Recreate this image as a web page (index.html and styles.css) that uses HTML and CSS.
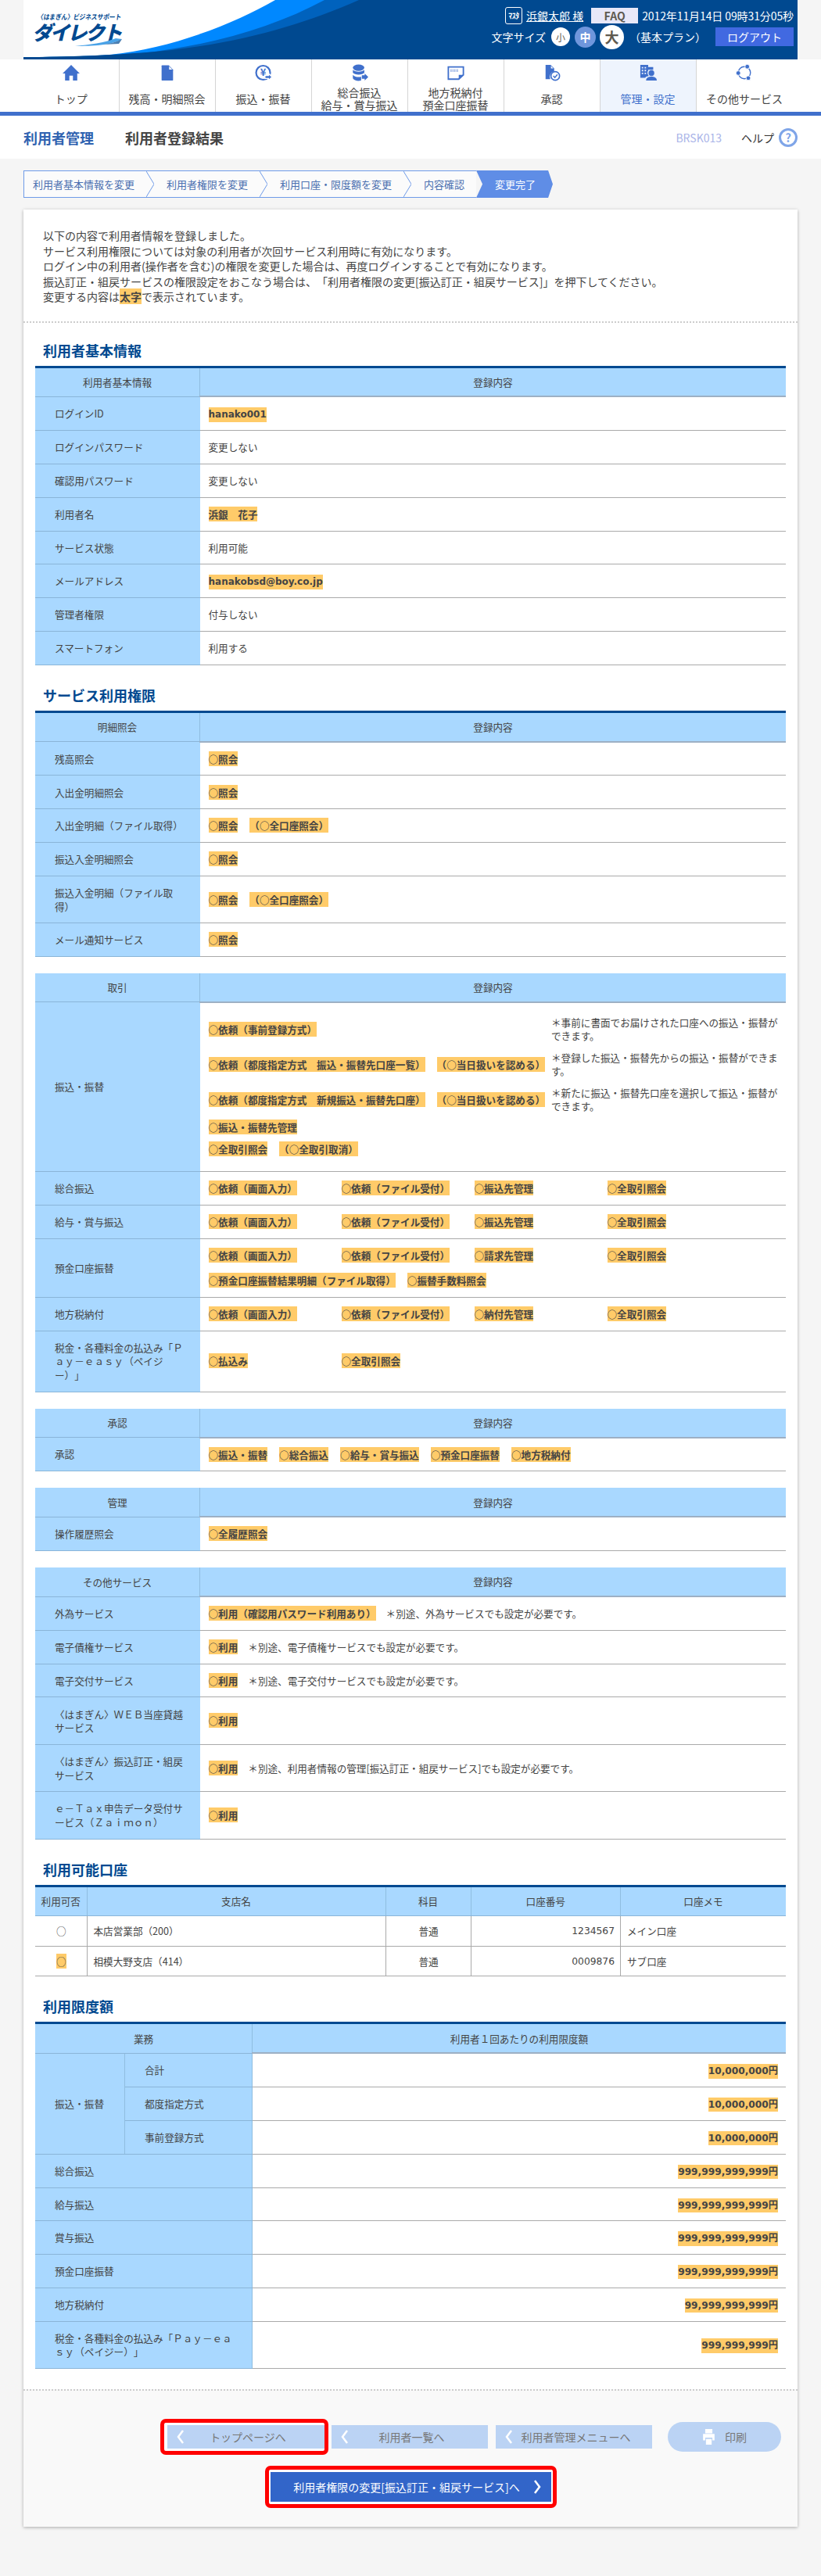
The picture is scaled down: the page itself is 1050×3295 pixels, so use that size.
FILE: index.html
```html
<!DOCTYPE html>
<html lang="ja">
<head>
    <meta charset="utf-8">
    <title>利用者登録結果</title>
    <link rel="stylesheet" href="styles.css">
</head>
<body>
    <header class="site-header">
        <svg class="swoosh" viewBox="0 0 990 76" preserveAspectRatio="none">
            <path fill="#0088ff" d="M322 0 C270 30 190 62 110 70 C70 73 30 73 0 73 L0 76 L990 76 L990 0 Z"/>
            <path fill="#0062bd" d="M385 0 C320 35 240 58 150 68 C100 72 40 73 0 73 L0 76 L990 76 L990 0 Z"/>
            <path fill="#004990" d="M429 0 C360 30 290 52 190 64 C120 71 50 73 0 73 L0 76 L990 76 L990 0 Z"/>
        </svg>
        <div class="logo">
            <div class="logo-sub">〈はまぎん〉ビジネスサポート</div>
            <div class="logo-main">ダイレクト</div>
            <svg class="logo-wave" viewBox="0 0 60 12"><path fill="#4aa3e8" d="M0 11 C18 9 38 7 52 1 L60 2 C46 10 22 11 0 11 Z"/><path fill="#004990" d="M36 9 C44 8 52 6 60 2 L56 8 Z" opacity="0.7"/></svg>
        </div>
        <div class="user-box">
            <div class="user-row">
                <span class="master-mark">ﾏｽﾀ</span>
                <a class="user-name">浜銀太郎 様</a>
                <span class="faq">FAQ</span>
                <span class="clock">2012年11月14日 09時31分05秒</span>
            </div>
            <div class="user-row user-row-size">
                <span class="size-label">文字サイズ</span>
                <span class="size-btn size-s">小</span>
                <span class="size-btn size-m">中</span>
                <span class="size-btn size-l">大</span>
                <span class="plan">（基本プラン）</span>
                <span class="logout">ログアウト</span>
            </div>
        </div>
    </header>

    <nav class="main-nav">
        <ul class="nav-list">
            <li class="nav-item">
                <svg class="nav-icon" viewBox="0 0 24 24"><path d="M12 1 L24 13 H20.500 V23 H14.500 V16 H9.500 V23 H3.500 V13 H0 Z"/></svg>
                <span class="nav-label">トップ</span>
            </li>
            <li class="nav-item">
                <svg class="nav-icon" viewBox="0 0 24 24"><path d="M5 1.500 H14 L20 8 V22 Q20 23 19 23 H5 Q4 23 4 22 V2.500 Q4 1.500 5 1.500 Z"/><path fill="#fff" d="M14.500 3 L18.800 7.600 H14.500 Z"/></svg>
                <span class="nav-label">残高・明細照会</span>
            </li>
            <li class="nav-item">
                <svg class="nav-icon" viewBox="0 0 24 24"><circle cx="11.500" cy="12" r="9.800" fill="none" stroke="#4070cc" stroke-width="2.400"/><text x="11.500" y="16.500" text-anchor="middle" class="yen">¥</text><path stroke="#fff" stroke-width="1.500" d="M14 16 H19 V13 L24 18 L19 23 V20 H14 Z"/></svg>
                <span class="nav-label">振込・振替</span>
            </li>
            <li class="nav-item">
                <svg class="nav-icon" viewBox="0 0 24 24"><ellipse cx="10.500" cy="5" rx="8" ry="4.500"/><path d="M2.500 8 C5 11.500 16 11.500 18.500 8 V12 C16 15.500 5 15.500 2.500 12 Z"/><path d="M2.500 15 C5 18.500 12 18.500 14 17.500 V23 C9 24 4 23 2.500 20 Z"/><path d="M15 15.500 H19 V13 L24 18 L19 23 V20.500 H15 Z"/></svg>
                <span class="nav-label">総合振込<br>給与・賞与振込</span>
            </li>
            <li class="nav-item">
                <svg class="nav-icon" viewBox="0 0 24 24"><path fill="none" stroke="#4070cc" stroke-width="2" d="M1.500 4 H22.500 V15 L16 21 H1.500 Z"/><path d="M22 15 H16 V21 Z"/><path d="M4.500 7 h1.500 v4 h-1.500 z M7 7 h1 v4 h-1 z M9 7 h1.500 v4 h-1.500 z M11.500 7 h1 v4 h-1 z M13.500 7 h1.500 v4 h-1.500 z" opacity="0.55"/></svg>
                <span class="nav-label">地方税納付<br>預金口座振替</span>
            </li>
            <li class="nav-item">
                <svg class="nav-icon" viewBox="0 0 24 24"><path d="M3 1 H10 L15 6 V10 A8 8 0 0 0 9.500 21 H3 Z"/><path fill="#fff" d="M10.500 2.500 L13.800 6 H10.500 Z"/><circle cx="16.500" cy="16.500" r="6" fill="none" stroke="#4070cc" stroke-width="1.800"/><path fill="none" stroke="#4070cc" stroke-width="1.600" d="M13.800 16.500 L16 18.800 L19.500 14.500"/></svg>
                <span class="nav-label">承認</span>
            </li>
            <li class="nav-item nav-item-active">
                <svg class="nav-icon" viewBox="0 0 24 24"><path d="M1 1 H12 V4 H19 V8 H12 V9 A5 5 0 0 0 13 16 H12 V17 C9 17.500 8.500 18 8 19 H1 Z"/><path fill="#eef4fd" d="M3 4 h2 v2 h-2 z M7 4 h2 v2 h-2 z M3 8 h2 v2 h-2 z M7 8 h2 v2 h-2 z M3 12 h2 v2 h-2 z M7 12 h2 v2 h-2 z"/><circle cx="16.500" cy="12.500" r="4"/><path d="M9 23 C9 18.500 13 17.500 16.500 17.500 C20 17.500 24 18.500 24 23 Z"/></svg>
                <span class="nav-label">管理・設定</span>
            </li>
            <li class="nav-item">
                <svg class="nav-icon" viewBox="0 0 24 24"><circle cx="12" cy="12" r="8.500" fill="none" stroke="#4070cc" stroke-width="1.500"/><circle cx="16" cy="3.500" r="3.200" stroke="#fff"/><circle cx="3.500" cy="12.500" r="3.200" stroke="#fff"/><circle cx="17.500" cy="19.500" r="3.200" stroke="#fff"/></svg>
                <span class="nav-label">その他サービス</span>
            </li>
        </ul>
    </nav>

    <div class="page-title">
        <span class="title-group">利用者管理</span>
        <h1 class="title-main">利用者登録結果</h1>
        <span class="screen-id">BRSK013</span>
        <span class="help">ヘルプ<span class="help-mark">?</span></span>
    </div>

    <ol class="steps">
        <li class="step">利用者基本情報を変更</li>
        <li class="step-sep"><svg viewBox="0 0 10 33" preserveAspectRatio="none"><path d="M0 0 L10 16.500 L0 33"/></svg></li>
        <li class="step">利用者権限を変更</li>
        <li class="step-sep"><svg viewBox="0 0 10 33" preserveAspectRatio="none"><path d="M0 0 L10 16.500 L0 33"/></svg></li>
        <li class="step">利用口座・限度額を変更</li>
        <li class="step-sep"><svg viewBox="0 0 10 33" preserveAspectRatio="none"><path d="M0 0 L10 16.500 L0 33"/></svg></li>
        <li class="step">内容確認</li>
        <li class="step step-now">変更完了</li>
    </ol>

    <main class="card">
        <div class="intro">
            <p>以下の内容で利用者情報を登録しました。</p>
            <p>サービス利用権限については対象の利用者が次回サービス利用時に有効になります。</p>
            <p>ログイン中の利用者(操作者を含む)の権限を変更した場合は、再度ログインすることで有効になります。</p>
            <p>振込訂正・組戻サービスの権限設定をおこなう場合は、「利用者権限の変更[振込訂正・組戻サービス]」を押下してください。</p>
            <p>変更する内容は<span class="mark-bold">太字</span>で表示されています。</p>
        </div>

        <div class="content">
            <h2 class="sec-head">利用者基本情報</h2>
            <table class="tbl tbl-top">
                <colgroup><col class="col-name"><col></colgroup>
                <tr><th>利用者基本情報</th><th class="th-main">登録内容</th></tr>
                <tr><th class="row-name">ログインID</th><td><span class="hl latin">hanako001</span></td></tr>
                <tr><th class="row-name">ログインパスワード</th><td>変更しない</td></tr>
                <tr><th class="row-name">確認用パスワード</th><td>変更しない</td></tr>
                <tr><th class="row-name">利用者名</th><td><span class="hl">浜銀　花子</span></td></tr>
                <tr><th class="row-name">サービス状態</th><td>利用可能</td></tr>
                <tr><th class="row-name">メールアドレス</th><td><span class="hl latin">hanakobsd@boy.co.jp</span></td></tr>
                <tr><th class="row-name">管理者権限</th><td>付与しない</td></tr>
                <tr><th class="row-name">スマートフォン</th><td>利用する</td></tr>
            </table>

            <h2 class="sec-head">サービス利用権限</h2>
            <table class="tbl tbl-top">
                <colgroup><col class="col-name"><col></colgroup>
                <tr><th>明細照会</th><th class="th-main">登録内容</th></tr>
                <tr><th class="row-name">残高照会</th><td><span class="hl">○照会</span></td></tr>
                <tr><th class="row-name">入出金明細照会</th><td><span class="hl">○照会</span></td></tr>
                <tr><th class="row-name">入出金明細（ファイル取得）</th><td><span class="hl">○照会</span><span class="hl">（○全口座照会）</span></td></tr>
                <tr><th class="row-name">振込入金明細照会</th><td><span class="hl">○照会</span></td></tr>
                <tr><th class="row-name">振込入金明細（ファイル取得）</th><td><span class="hl">○照会</span><span class="hl">（○全口座照会）</span></td></tr>
                <tr><th class="row-name">メール通知サービス</th><td><span class="hl">○照会</span></td></tr>
            </table>

            <table class="tbl tbl-next">
                <colgroup><col class="col-name"><col></colgroup>
                <tr><th>取引</th><th class="th-main">登録内容</th></tr>
                <tr>
                    <th class="row-name">振込・振替</th>
                    <td class="td-transfer">
                        <div class="note-row"><div><span class="hl">○依頼（事前登録方式）</span></div><div class="note">＊事前に書面でお届けされた口座への振込・振替ができます。</div></div>
                        <div class="note-row"><div><span class="hl">○依頼（都度指定方式　振込・振替先口座一覧）</span><span class="hl">（○当日扱いを認める）</span></div><div class="note">＊登録した振込・振替先からの振込・振替ができます。</div></div>
                        <div class="note-row"><div><span class="hl">○依頼（都度指定方式　新規振込・振替先口座）</span><span class="hl">（○当日扱いを認める）</span></div><div class="note">＊新たに振込・振替先口座を選択して振込・振替ができます。</div></div>
                        <div class="opt-line"><span class="hl">○振込・振替先管理</span></div>
                        <div class="opt-line"><span class="hl">○全取引照会</span><span class="hl">（○全取引取消）</span></div>
                    </td>
                </tr>
                <tr>
                    <th class="row-name">総合振込</th>
                    <td><div class="cols"><div><span class="hl">○依頼（画面入力）</span></div><div><span class="hl">○依頼（ファイル受付）</span></div><div><span class="hl">○振込先管理</span></div><div><span class="hl">○全取引照会</span></div></div></td>
                </tr>
                <tr>
                    <th class="row-name">給与・賞与振込</th>
                    <td><div class="cols"><div><span class="hl">○依頼（画面入力）</span></div><div><span class="hl">○依頼（ファイル受付）</span></div><div><span class="hl">○振込先管理</span></div><div><span class="hl">○全取引照会</span></div></div></td>
                </tr>
                <tr>
                    <th class="row-name">預金口座振替</th>
                    <td>
                        <div class="cols"><div><span class="hl">○依頼（画面入力）</span></div><div><span class="hl">○依頼（ファイル受付）</span></div><div><span class="hl">○請求先管理</span></div><div><span class="hl">○全取引照会</span></div></div>
                        <div class="opt-gap"><span class="hl">○預金口座振替結果明細（ファイル取得）</span><span class="hl">○振替手数料照会</span></div>
                    </td>
                </tr>
                <tr>
                    <th class="row-name">地方税納付</th>
                    <td><div class="cols"><div><span class="hl">○依頼（画面入力）</span></div><div><span class="hl">○依頼（ファイル受付）</span></div><div><span class="hl">○納付先管理</span></div><div><span class="hl">○全取引照会</span></div></div></td>
                </tr>
                <tr>
                    <th class="row-name">税金・各種料金の払込み「Ｐａｙ－ｅａｓｙ（ペイジー）」</th>
                    <td><div class="cols"><div><span class="hl">○払込み</span></div><div><span class="hl">○全取引照会</span></div></div></td>
                </tr>
            </table>

            <table class="tbl tbl-next">
                <colgroup><col class="col-name"><col></colgroup>
                <tr><th>承認</th><th class="th-main">登録内容</th></tr>
                <tr><th class="row-name">承認</th><td><span class="hl">○振込・振替</span><span class="hl">○総合振込</span><span class="hl">○給与・賞与振込</span><span class="hl">○預金口座振替</span><span class="hl">○地方税納付</span></td></tr>
            </table>

            <table class="tbl tbl-next">
                <colgroup><col class="col-name"><col></colgroup>
                <tr><th>管理</th><th class="th-main">登録内容</th></tr>
                <tr><th class="row-name">操作履歴照会</th><td><span class="hl">○全履歴照会</span></td></tr>
            </table>

            <table class="tbl tbl-next">
                <colgroup><col class="col-name"><col></colgroup>
                <tr><th>その他サービス</th><th class="th-main">登録内容</th></tr>
                <tr><th class="row-name">外為サービス</th><td><span class="hl">○利用（確認用パスワード利用あり）</span><span class="after-hl">＊別途、外為サービスでも設定が必要です。</span></td></tr>
                <tr><th class="row-name">電子債権サービス</th><td><span class="hl">○利用</span><span class="after-hl">＊別途、電子債権サービスでも設定が必要です。</span></td></tr>
                <tr><th class="row-name">電子交付サービス</th><td><span class="hl">○利用</span><span class="after-hl">＊別途、電子交付サービスでも設定が必要です。</span></td></tr>
                <tr><th class="row-name">〈はまぎん〉ＷＥＢ当座貸越サービス</th><td><span class="hl">○利用</span></td></tr>
                <tr><th class="row-name">〈はまぎん〉振込訂正・組戻サービス</th><td><span class="hl">○利用</span><span class="after-hl">＊別途、利用者情報の管理[振込訂正・組戻サービス]でも設定が必要です。</span></td></tr>
                <tr><th class="row-name">ｅ－Ｔａｘ申告データ受付サービス（Ｚａｉｍｏｎ）</th><td><span class="hl">○利用</span></td></tr>
            </table>

            <h2 class="sec-head">利用可能口座</h2>
            <table class="tbl tbl-top tbl-acct">
                <colgroup><col class="col-a1"><col class="col-a2"><col class="col-a3"><col class="col-a4"><col></colgroup>
                <tr><th>利用可否</th><th>支店名</th><th>科目</th><th>口座番号</th><th>口座メモ</th></tr>
                <tr><td class="center">○</td><td>本店営業部（200）</td><td class="center">普通</td><td class="right acct-no">1234567</td><td>メイン口座</td></tr>
                <tr><td class="center"><span class="hl hl-tight">○</span></td><td>相模大野支店（414）</td><td class="center">普通</td><td class="right acct-no">0009876</td><td>サブ口座</td></tr>
            </table>

            <h2 class="sec-head">利用限度額</h2>
            <table class="tbl tbl-top tbl-limit">
                <colgroup><col class="col-l1"><col class="col-l2"><col></colgroup>
                <tr><th colspan="2">業務</th><th class="th-main">利用者１回あたりの利用限度額</th></tr>
                <tr><th class="row-name" rowspan="3">振込・振替</th><th class="row-name">合計</th><td class="right"><span class="hl amount">10,000,000円</span></td></tr>
                <tr><th class="row-name">都度指定方式</th><td class="right"><span class="hl amount">10,000,000円</span></td></tr>
                <tr><th class="row-name">事前登録方式</th><td class="right"><span class="hl amount">10,000,000円</span></td></tr>
                <tr><th class="row-name" colspan="2">総合振込</th><td class="right"><span class="hl amount">999,999,999,999円</span></td></tr>
                <tr><th class="row-name" colspan="2">給与振込</th><td class="right"><span class="hl amount">999,999,999,999円</span></td></tr>
                <tr><th class="row-name" colspan="2">賞与振込</th><td class="right"><span class="hl amount">999,999,999,999円</span></td></tr>
                <tr><th class="row-name" colspan="2">預金口座振替</th><td class="right"><span class="hl amount">999,999,999,999円</span></td></tr>
                <tr><th class="row-name" colspan="2">地方税納付</th><td class="right"><span class="hl amount">99,999,999,999円</span></td></tr>
                <tr><th class="row-name" colspan="2">税金・各種料金の払込み「Ｐａｙ－ｅａｓｙ（ペイジー）」</th><td class="right"><span class="hl amount">999,999,999円</span></td></tr>
            </table>
        </div>

        <div class="actions">
            <div class="action-row">
                <span class="red-frame red-frame-back">
                    <a class="btn btn-back">
                        <svg class="chev chev-left" viewBox="0 0 10 18"><path d="M8 1 L2 9 L8 17"/></svg>
                        トップページへ
                    </a>
                </span>
                <a class="btn btn-back btn-list">
                    <svg class="chev chev-left" viewBox="0 0 10 18"><path d="M8 1 L2 9 L8 17"/></svg>
                    利用者一覧へ
                </a>
                <a class="btn btn-back btn-menu">
                    <svg class="chev chev-left" viewBox="0 0 10 18"><path d="M8 1 L2 9 L8 17"/></svg>
                    利用者管理メニューへ
                </a>
                <a class="btn-print">
                    <svg class="print-icon" viewBox="0 0 18 24"><path fill="#fff" d="M4 1 H14 V7 H4 Z M1 8 H17 V17 H14 V13 H4 V17 H1 Z M5 15 H13 V23 H5 Z"/></svg>
                    印刷
                </a>
            </div>
            <div class="action-row action-row-main">
                <span class="red-frame">
                    <a class="btn btn-main">
                        利用者権限の変更[振込訂正・組戻サービス]へ
                        <svg class="chev chev-right" viewBox="0 0 10 18"><path d="M2 1 L8 9 L2 17"/></svg>
                    </a>
                </span>
            </div>
        </div>
    </main>
</body>
</html>
```
FILE: styles.css
```css
* {
    box-sizing: border-box;
}
body {
    margin: 0;
    height: 3295px;
    background-color: #f5f5f5;
    font-family: "Noto Sans CJK JP", "Noto Sans", sans-serif;
    font-size: 14px;
    color: #444;
    text-spacing-trim: space-all;
}
ul, ol {
    list-style: none;
    margin: 0;
    padding: 0;
}

/* header */
.site-header {
    position: relative;
    display: flex;
    justify-content: space-between;
    width: 990px;
    height: 76px;
    margin: 0 30px;
    background: #fff;
    overflow: hidden;
}
.swoosh {
    position: absolute;
    left: 0;
    top: 0;
    width: 990px;
    height: 76px;
}
.logo {
    position: relative;
    width: 120px;
    margin-left: 14px;
    padding-top: 15px;
    color: #004990;
}
.logo-sub {
    margin-left: 4px;
    font-size: 9px;
    line-height: 13px;
    font-weight: bold;
    white-space: nowrap;
    transform-origin: left center;
    transform: scaleX(0.85) skewX(-10deg);
}
.logo-main {
    font-size: 25px;
    line-height: 25px;
    font-weight: 900;
    white-space: nowrap;
    transform: skewX(-14deg);
    letter-spacing: -2.500px;
}
.logo-wave {
    position: absolute;
    left: 52px;
    top: 48px;
    width: 60px;
    height: 12px;
}
.user-box {
    position: relative;
    padding: 9px 5px 0 0;
    color: #fff;
}
.user-row {
    display: flex;
    align-items: center;
    justify-content: flex-end;
    height: 22px;
    white-space: nowrap;
}
.user-row-size {
    height: 32px;
}
.master-mark {
    width: 22px;
    height: 22px;
    margin-right: 5px;
    border: 1px solid #fff;
    border-radius: 3px;
    background: #004990;
    font-size: 10px;
    line-height: 20px;
    font-weight: bold;
    text-align: center;
    letter-spacing: -0.5px;
}
.user-name {
    text-decoration: underline;
    margin-right: 10px;
}
.faq {
    width: 60px;
    height: 20px;
    margin-right: 5px;
    background: #e8e8f8;
    color: #5f5a50;
    font-weight: bold;
    line-height: 20px;
    text-align: center;
}
.clock {
    letter-spacing: -0.1px;
}
.size-label {
    margin-right: 7px;
}
.size-btn {
    display: flex;
    justify-content: center;
    align-items: center;
    border-radius: 50%;
}
.size-s {
    width: 24px;
    height: 24px;
    background: #fff;
    color: #5f5a50;
    font-size: 12px;
    margin-right: 6px;
}
.size-m {
    width: 27px;
    height: 27px;
    background: #6f96dc;
    color: #fff;
    font-weight: bold;
    margin-right: 5px;
}
.size-l {
    width: 31px;
    height: 31px;
    background: #fff;
    color: #5f5a50;
    font-size: 18px;
    font-weight: bold;
    margin-right: 7px;
}
.plan {
    margin-right: 12px;
}
.logout {
    width: 100px;
    height: 24px;
    background: #4169e1;
    text-align: center;
    line-height: 24px;
}

/* global nav */
.main-nav {
    height: 72px;
    background: #fff;
    border-bottom: 5px solid #4070cc;
}
.nav-list {
    display: flex;
    width: 990px;
    height: 67px;
    margin-left: 30px;
}
.nav-item {
    width: 123px;
    height: 67px;
    padding-top: 6px;
    border-right: 1px solid #d5d5d5;
    text-align: center;
}
.nav-item:first-child {
    width: 122.500px;
}
.nav-item:last-child {
    border-right: none;
}
.nav-item-active {
    background: #eef4fd;
}
.nav-item-active .nav-label {
    color: #4070cc;
}
.nav-icon {
    display: block;
    width: 22px;
    height: 22px;
    margin: 0 auto;
    fill: #4070cc;
}
.yen {
    font-size: 14px;
    font-weight: bold;
    fill: #4070cc;
}
.nav-label {
    display: flex;
    align-items: center;
    justify-content: center;
    height: 33px;
    margin-top: 5px;
    line-height: 16px;
}

/* title band */
.page-title {
    display: flex;
    align-items: center;
    height: 55px;
    padding: 0 30px;
    background: #fff;
}
.title-group {
    width: 130px;
    font-size: 18px;
    font-weight: bold;
    color: #2f62b0;
}
.title-main {
    margin: 0;
    font-size: 18px;
    font-weight: bold;
    color: #444;
}
.screen-id {
    margin-left: auto;
    margin-right: 25px;
    color: #aab4e8;
}
.help {
    display: flex;
    align-items: center;
    color: #333;
}
.help-mark {
    width: 24px;
    height: 24px;
    margin-left: 6px;
    border: 3px solid #7fa5e8;
    border-radius: 50%;
    color: #7fa5e8;
    font-size: 15px;
    font-weight: bold;
    line-height: 18px;
    text-align: center;
}

/* steps */
.steps {
    display: flex;
    width: 677px;
    height: 35px;
    margin: 15px 0 0 30px;
    font-size: 13px;
    color: #4a6fb0;
}
.step {
    height: 35px;
    padding: 0 15px 0 16px;
    line-height: 33px;
    white-space: nowrap;
    background: #fbfbfb;
    border-top: 1px solid #6f9be8;
    border-bottom: 1px solid #6f9be8;
}
.step:first-child {
    padding-left: 11px;
    border-left: 1px solid #6f9be8;
}
.step-sep {
    width: 10px;
    height: 35px;
    background: #fbfbfb;
    border-top: 1px solid #6f9be8;
    border-bottom: 1px solid #6f9be8;
}
.step-sep svg {
    display: block;
    width: 10px;
    height: 33px;
}
.step-sep path {
    fill: none;
    stroke: #6f9be8;
    stroke-width: 1;
}
.step-now {
    width: 102px;
    padding: 0 0 0 24px;
    line-height: 35px;
    border: none;
    background: #5f8de6;
    color: #fff;
    clip-path: polygon(0 0, 92px 0, 100% 50%, 92px 100%, 0 100%, 8px 50%);
}

/* card */
.card {
    width: 990px;
    margin: 15px 0 0 30px;
    background: #fff;
    box-shadow: 0 1px 4px rgba(0, 0, 0, 0.3);
}
.intro {
    padding: 24px 25px 21px;
    border-bottom: 2px dotted #ccc;
    line-height: 19.500px;
}
.intro p {
    margin: 0;
}
.mark-bold {
    font-weight: bold;
    background: #ffcb69;
}
.content {
    padding: 1px 15px 26px;
}
.sec-head {
    margin: 25px 0 7px 10px;
    font-size: 18px;
    line-height: 26px;
    font-weight: bold;
    color: #004990;
}
.sec-head:first-child {
    margin-top: 21px;
}

/* tables */
.tbl {
    width: 960px;
    table-layout: fixed;
    border-collapse: collapse;
    font-size: 12.600px;
    line-height: 17.600px;
}
.tbl-next {
    margin-top: 21px;
}
.tbl-top {
    border-top: 3px solid #004990;
}
.col-name {
    width: 210.500px;
}
.tbl th {
    padding: 9.200px 6px;
    background: #a9d8ff;
    border-right: 1px solid #8fbde0;
    border-bottom: 1px solid #8ab5d8;
    font-weight: normal;
    text-align: center;
    color: #444;
}
.tbl th.th-main {
    border-right: none;
    border-bottom: 2px solid #9db0c4;
}
.tbl th.row-name {
    padding: 12.100px 20px 12.100px 25px;
    text-align: left;
    border-right: none;
}
.tbl td {
    padding: 12.100px 10px 12.100px 11px;
    border-bottom: 1px solid #aaa;
    color: #444;
}
.hl {
    background: #ffcb69;
    font-weight: bold;
}
.hl + .hl {
    margin-left: 15px;
}
.latin, .amount {
    font-family: "DejaVu Sans", "Noto Sans CJK JP", sans-serif;
    font-size: 12px;
    line-height: 1;
    padding: 2.100px 0;
}
.amount {
    font-size: 12.200px;
}
.tbl .acct-no {
    font-family: "DejaVu Sans", sans-serif;
    font-size: 12.300px;
    padding-top: 11.200px;
    padding-bottom: 9.200px;
}
.after-hl {
    margin-left: 13px;
}
.cols {
    display: grid;
    grid-template-columns: repeat(4, 170px);
}
.opt-gap {
    margin-top: 15px;
}
.tbl .td-transfer {
    padding: 16px 10px 14px 11px;
}
.note-row {
    display: flex;
    align-items: center;
    justify-content: space-between;
    height: 35px;
    margin-bottom: 10px;
}
.note-row:nth-child(3) {
    margin-bottom: 4px;
}
.note {
    width: 290px;
}
.opt-line {
    line-height: 28px;
}
.center {
    text-align: center;
}
.right {
    text-align: right;
}

/* account table */
.col-a1 {
    width: 66px;
}
.col-a2 {
    width: 382px;
}
.col-a3 {
    width: 109px;
}
.col-a4 {
    width: 191.500px;
}
.tbl-acct th {
    padding: 9.200px 2px;
}
.tbl-acct th:last-child {
    border-right: none;
}
.tbl-acct td {
    padding: 10.200px 7px 10.200px 8px;
    border-right: 1px solid #aaa;
}
.tbl-acct td:last-child {
    border-right: none;
}
.tbl-acct .hl-tight {
    font-weight: normal;
}

/* limit table */
.col-l1 {
    width: 114.500px;
}
.col-l2 {
    width: 163px;
}
.tbl-limit th.row-name {
    padding-right: 13px;
    border-right: 1px solid #8fbde0;
}
.tbl-limit td {
    padding-right: 10px;
}

/* footer buttons */
.actions {
    height: 176px;
    padding-top: 36px;
    background: #f9f9f9;
    border-top: 2px dotted #ccc;
}
.action-row {
    display: flex;
    align-items: center;
    height: 46px;
    padding-left: 175px;
}
.action-row-main {
    justify-content: center;
    height: 54px;
    margin-top: 14px;
    padding-left: 0;
}
.red-frame {
    display: block;
    padding: 3px 2px;
    border: 5px solid #f00;
    border-radius: 7px;
    background: #fff;
}
.red-frame-back {
    padding: 3px 0 3px 4px;
    margin-right: 4px;
}
.btn {
    position: relative;
    display: block;
    text-align: center;
}
.btn-back {
    width: 201px;
    height: 30px;
    padding-left: 5px;
    background: #bbd3f4;
    color: #777;
    line-height: 30px;
}
.btn-list {
    width: 200px;
    margin-right: 10px;
}
.btn-menu {
    width: 200px;
    margin-right: 20px;
}
.btn-main {
    width: 359px;
    height: 38px;
    padding-right: 10px;
    background: #3265c9;
    color: #fff;
    line-height: 38px;
}
.chev {
    position: absolute;
    top: 6px;
    width: 10px;
    height: 18px;
}
.chev path {
    fill: none;
    stroke: #fff;
    stroke-width: 2.500;
}
.chev-left {
    left: 12px;
}
.chev-right {
    right: 13px;
    top: 10px;
}
.btn-print {
    display: flex;
    align-items: center;
    justify-content: center;
    width: 145px;
    height: 38px;
    border-radius: 19px;
    background: #bbd3f4;
    color: #777;
}
.print-icon {
    width: 17px;
    height: 22px;
    margin-right: 12px;
}
```
